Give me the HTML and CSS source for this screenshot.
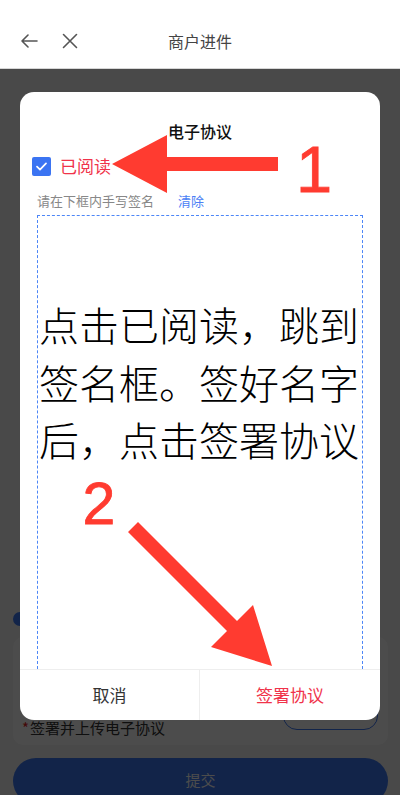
FILE: index.html
```html
<!DOCTYPE html>
<html lang="zh-CN">
<head>
<meta charset="utf-8">
<title>商户进件</title>
<link rel="stylesheet" href="styles.css">
</head>
<body>
<header class="topbar">
  <div class="topbar-left">
    <svg class="ico-back" width="18" height="14" viewBox="0 0 18 14"><path d="M17 7H2M8 1L2 7l6 6" fill="none" stroke="#555" stroke-width="1.6" stroke-linecap="round" stroke-linejoin="round"/></svg>
    <svg class="ico-close" width="16" height="16" viewBox="0 0 16 16"><path d="M1.5 1.5l13 13M14.5 1.5l-13 13" fill="none" stroke="#555" stroke-width="1.6" stroke-linecap="round"/></svg>
  </div>
  <div class="topbar-title">商户进件</div>
  <div></div>
</header>

<main class="page">
  <div class="tab-pill"></div>
  <section class="card">
    <div class="card-label"><span class="req">*</span>签署并上传电子协议</div>
    <div class="outline-btn"></div>
  </section>
  <div class="submit">提交</div>
</main>

<div class="mask">
  <div class="dialog">
    <div class="dialog-title">电子协议</div>
    <div class="read-row">
      <span class="checkbox"><svg width="11" height="9" viewBox="0 0 11 9"><path d="M1 4.6l3 3L10 1.4" fill="none" stroke="#fff" stroke-width="1.7" stroke-linecap="round" stroke-linejoin="round"/></svg></span>
      <span class="read-text">已阅读</span>
    </div>
    <div class="hint">请在下框内手写签名<span class="clear">清除</span></div>
    <div class="sign-pad">点击已阅读，跳到签名框。签好名字后，点击签署协议</div>
    <div class="dialog-footer">
      <div class="btn-cancel">取消</div>
      <div class="btn-sign">签署协议</div>
    </div>
  </div>
</div>

<svg class="annot" width="400" height="795" viewBox="0 0 400 795">
  <polygon points="112,164 167,135 167,157 278,157 278,171 167,171 167,193" fill="#ff3b30"/>
  <text x="314" y="192" class="num num1">1</text>
  <text x="99" y="524" class="num num2">2</text>
  <polygon points="138,522 237,621 253,605 272,666 211,647 227,631 128,532" fill="#ff3b30"/>
</svg>
</body>
</html>
```
FILE: styles.css
```css
* { box-sizing: border-box; }
html, body { margin: 0; padding: 0; }
body {
  width: 400px;
  height: 795px;
  overflow: hidden;
  position: relative;
  background: #f5f5f5;
  font-family: "Noto Sans CJK SC", "Noto Sans", sans-serif;
  color: #333;
}

.topbar {
  height: 69px;
  padding-top: 14px;
  background: #fff;
  border-bottom: 1px solid #d6d6d6;
  display: grid;
  grid-template-columns: 1fr auto 1fr;
  align-items: center;
}
.topbar-left {
  display: flex;
  align-items: center;
  padding-left: 20px;
  gap: 24px;
}
.topbar-title {
  font-size: 16px;
  color: #444;
  line-height: 22px;
}

.page {
  height: 726px;
  padding: 0 12px 0 13px;
  display: flex;
  flex-direction: column;
  align-items: stretch;
}
.page > * { flex-shrink: 0; }
.tab-pill {
  margin-top: 543px;
  width: 200px;
  height: 14px;
  border-radius: 7px;
  background: #3c78f6;
}
.card {
  margin-top: 11px;
  height: 108px;
  background: #fff;
  border-radius: 10px;
  padding: 61px 10px 0 9px;
  display: flex;
  justify-content: space-between;
  align-items: flex-start;
}
.card-label {
  margin-top: 20px;
  font-size: 15px;
  line-height: 20px;
  color: #333;
}
.req { color: #e02020; margin-right: 1px; }
.outline-btn {
  width: 95px;
  height: 32px;
  border: 1px solid #3c78f6;
  border-radius: 14px;
}
.submit {
  margin-top: 13px;
  height: 46px;
  border-radius: 23px;
  background: #3c78f6;
  color: #fff;
  font-size: 15px;
  line-height: 44px;
  text-align: center;
}

.mask {
  position: absolute;
  top: 69px;
  left: 0;
  right: 0;
  bottom: 0;
  background: rgba(0, 0, 0, 0.7);
  padding: 23px 20px 0;
}
.dialog {
  height: 628px;
  background: #fff;
  border-radius: 14px;
  overflow: hidden;
  display: flex;
  flex-direction: column;
}
.dialog-title {
  padding-top: 28px;
  font-size: 16px;
  line-height: 22px;
  font-weight: 500;
  color: #111;
  text-align: center;
}
.read-row {
  margin-top: 13px;
  height: 22px;
  padding-left: 12px;
  display: flex;
  align-items: center;
  gap: 9px;
}
.checkbox {
  width: 19px;
  height: 19px;
  border-radius: 2px;
  background: #3b74f2;
  display: flex;
  align-items: center;
  justify-content: center;
}
.read-text {
  font-size: 17px;
  line-height: 22px;
  color: #f0334a;
}
.hint {
  margin-top: 15px;
  padding-left: 17px;
  font-size: 13px;
  line-height: 18px;
  color: #888;
}
.clear {
  margin-left: 24px;
  color: #4a7ef5;
}
.sign-pad {
  margin: 5px 17px 0;
  flex: 1;
  border: 1px dashed #4d86f7;
  border-bottom: none;
  padding: 80px 0 0 1px;
  font-size: 40px;
  font-weight: 300;
  line-height: 57.5px;
  color: #000;
}
.dialog-footer {
  height: 51px;
  border-top: 1px solid #eee;
  display: grid;
  grid-template-columns: 1fr 1fr;
  font-size: 17px;
  text-align: center;
  line-height: 50px;
}
.btn-cancel { color: #333; border-right: 1px solid #eee; }
.btn-sign { color: #f0334a; }

.annot {
  position: absolute;
  top: 0;
  left: 0;
  pointer-events: none;
}
.num {
  font-family: "Liberation Sans", Arial, sans-serif;
  fill: #ff3b30;
  stroke: #ff3b30;
  stroke-width: 0.8px;
  text-anchor: middle;
}
.num1 { font-size: 65px; }
.num2 { font-size: 59px; }
```
